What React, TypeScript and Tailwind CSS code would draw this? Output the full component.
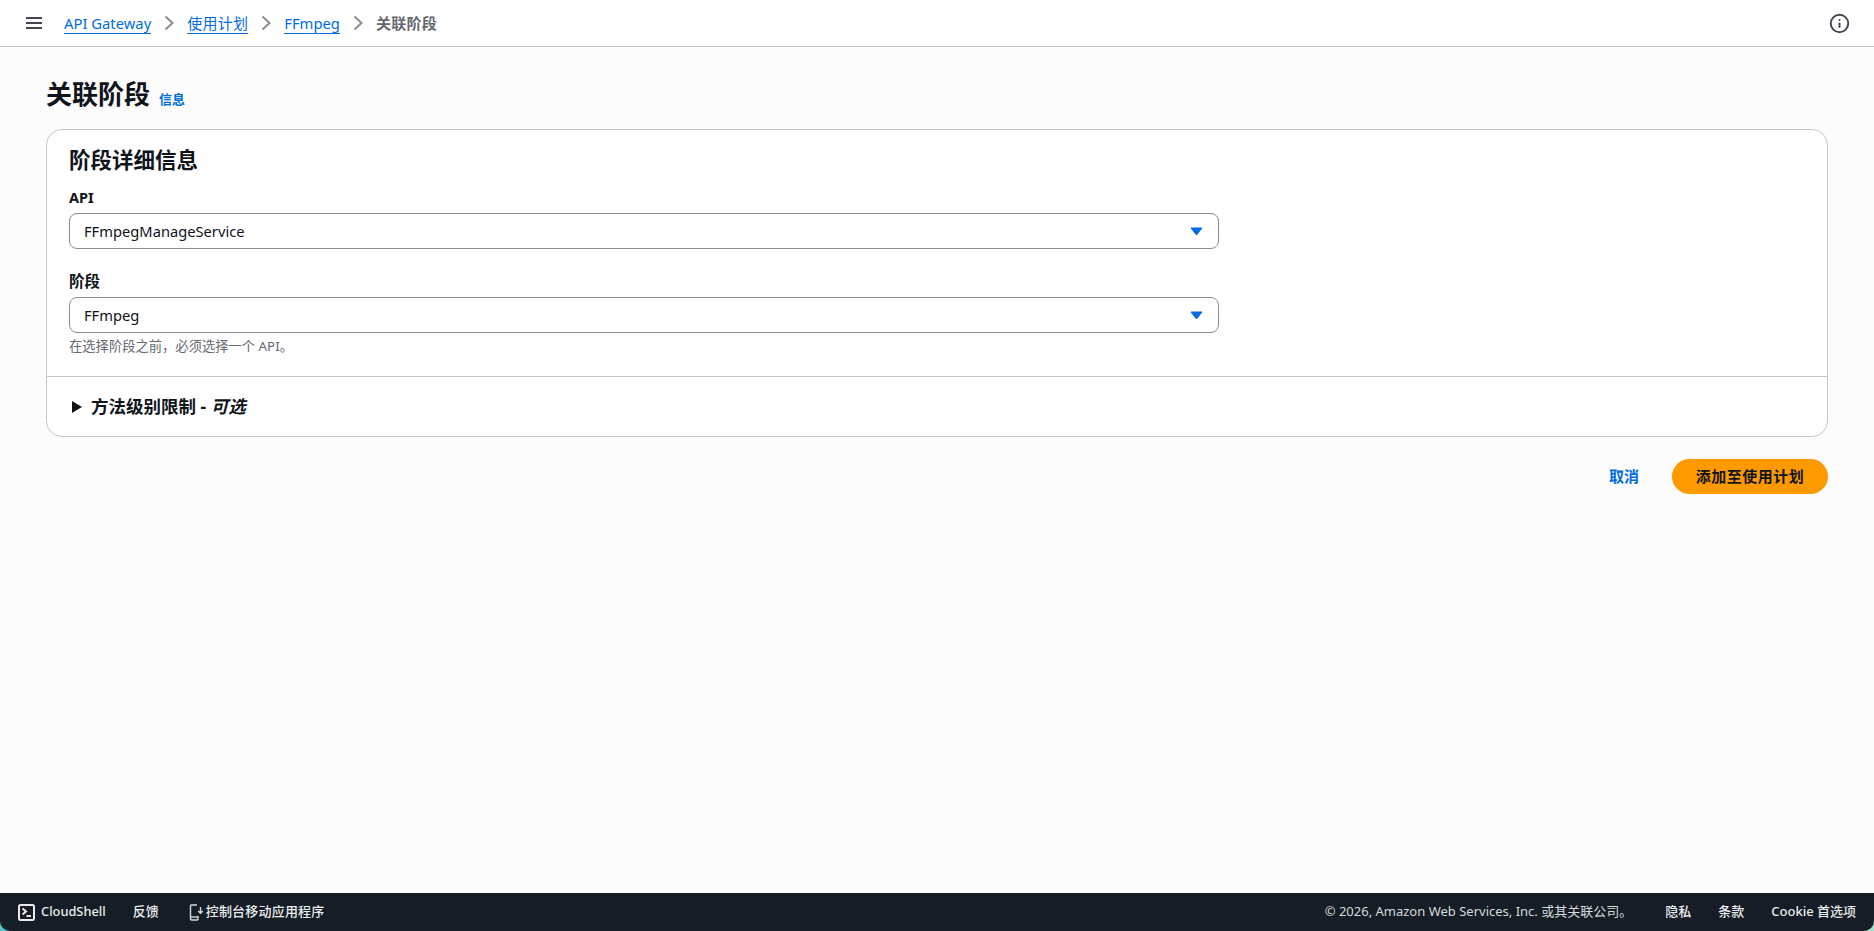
import { Info } from 'lucide-react';

const font = "font-['Noto_Sans','Noto_Sans_CJK_SC',sans-serif]";

function Chevron() {
  return (
    <svg width="16" height="16" viewBox="0 0 16 16" fill="none" stroke="#8c8c94" strokeWidth="2" className="mx-[10px]">
      <path d="m4.500 1.500 7 6.500-7 6.500" />
    </svg>
  );
}

function SelectBox({ value }: { value: string }) {
  return (
    <div className="flex items-center justify-between w-[1150px] h-[36px] bg-white border border-[#8c8c94] rounded-[8px] pl-[14px] pr-[15px] text-[14.7px] text-[#0f141a]">
      <span>{value}</span>
      <svg width="13" height="9" viewBox="0 0 13 9" fill="#006ce0" stroke="#006ce0" strokeLinejoin="round">
        <path d="M1 1h11L6.500 8z" />
      </svg>
    </div>
  );
}

function CloudShellIcon() {
  return (
    <svg width="17" height="17" viewBox="0 0 17 17" fill="none" stroke="#e8eaed" strokeWidth="2">
      <rect x="1" y="1" width="15" height="15" rx="1.500" />
      <path d="m4.500 4.500 3.500 3-3.500 3M8.500 12H13" />
    </svg>
  );
}

function MobileIcon() {
  return (
    <svg width="14" height="17" viewBox="0 0 14 17" fill="none" stroke="#d5dbdb" strokeWidth="1.4">
      <path d="M8 1H2.500A1 1 0 0 0 1.500 2v13a1 1 0 0 0 1 1h5.500a1 1 0 0 0 1-1V12" />
      <path d="M2 13h7" />
      <path d="M11.500 3v6M9.200 7l2.300 2.300L13.800 7" />
    </svg>
  );
}

export default function App() {
  return (
    <div className={`${font} flex flex-col h-[931px] bg-[#fcfcfc] text-[#0f141a] overflow-hidden`}>
      <header className="flex items-center h-[47px] bg-white border-b border-[#c6c6cd] pl-[26px] pr-[24px] shrink-0">
        <svg width="16" height="14" viewBox="0 0 16 14" fill="none" stroke="#424650" strokeWidth="2" className="mr-[22px]">
          <path d="M0 2h16M0 7h16M0 12h16" />
        </svg>
        <a className="text-[14.800px] text-[#006ce0] border-b border-[#006ce0] leading-[20px]">API Gateway</a>
        <Chevron />
        <a className="text-[15px] tracking-[0.25px] text-[#006ce0] border-b border-[#006ce0] leading-[20px]">使用计划</a>
        <Chevron />
        <a className="text-[14.800px] text-[#006ce0] border-b border-[#006ce0] leading-[20px]">FFmpeg</a>
        <Chevron />
        <span className="text-[15px] tracking-[0.25px] font-bold text-[#656871]">关联阶段</span>
        <Info size={21} strokeWidth={2.2} className="ml-auto text-[#424650]" />
      </header>

      <main className="flex-1 px-[46px]">
        <div className="flex items-baseline gap-[9px] pt-[30px] h-[82px]">
          <h1 className="text-[26px] leading-[34px] font-bold">关联阶段</h1>
          <a className="text-[13px] font-bold text-[#006ce0]">信息</a>
        </div>

        <section className="bg-white border border-[#c6c6cd] rounded-[16px]">
          <div className="px-[22px] pt-[16px] pb-[21px]">
            <h2 className="text-[21.500px] leading-[28px] font-bold mb-[12px]">阶段详细信息</h2>
            <label className="block text-[14.500px] leading-[22px] font-bold mb-[5px]">API</label>
            <SelectBox value="FFmpegManageService" />
            <label className="block text-[15.500px] leading-[22px] font-bold mt-[21px] mb-[5px]">阶段</label>
            <SelectBox value="FFmpeg" />
            <p className="text-[13.300px] leading-[18px] text-[#656871] mt-[4px]">在选择阶段之前，必须选择一个 API。</p>
          </div>
          <div className="flex items-center h-[60px] border-t border-[#c6c6cd] px-[25px]">
            <svg width="10" height="12" viewBox="0 0 10 12" fill="#0f141a" className="mr-[9px]">
              <path d="M0 0l10 6-10 6z" />
            </svg>
            <span className="text-[17.500px] font-bold">
              方法级别限制 - <i>可选</i>
            </span>
          </div>
        </section>

        <div className="flex items-center justify-end mt-[22px]">
          <a className="text-[15px] font-bold text-[#006ce0] mr-[33px]">取消</a>
          <button className="h-[35px] w-[156px] rounded-full bg-[#ff9900] text-[15px] tracking-[0.5px] font-bold text-[#0f141a]">
            添加至使用计划
          </button>
        </div>
      </main>

      <div className="bg-gradient-to-r from-[#4fc9c6] to-[#9fe0cf] shrink-0">
        <footer className="flex items-center h-[38px] bg-[#161d26] rounded-b-[10px] text-[13px] text-[#eaeded] px-[18px]">
          <CloudShellIcon />
          <span className="ml-[6px] text-[12.800px] font-medium">CloudShell</span>
          <span className="ml-[27px] font-medium">反馈</span>
          <span className="ml-[30px] mr-[3px]"><MobileIcon /></span>
          <span className="font-medium tracking-[0.2px]">控制台移动应用程序</span>
          <span className="ml-auto text-[#d5dbdb]">© 2026, Amazon Web Services, Inc. 或其关联公司。</span>
          <span className="ml-[33px] font-medium">隐私</span>
          <span className="ml-[27px] font-medium">条款</span>
          <span className="ml-[27px] font-medium">Cookie 首选项</span>
        </footer>
      </div>
    </div>
  );
}
